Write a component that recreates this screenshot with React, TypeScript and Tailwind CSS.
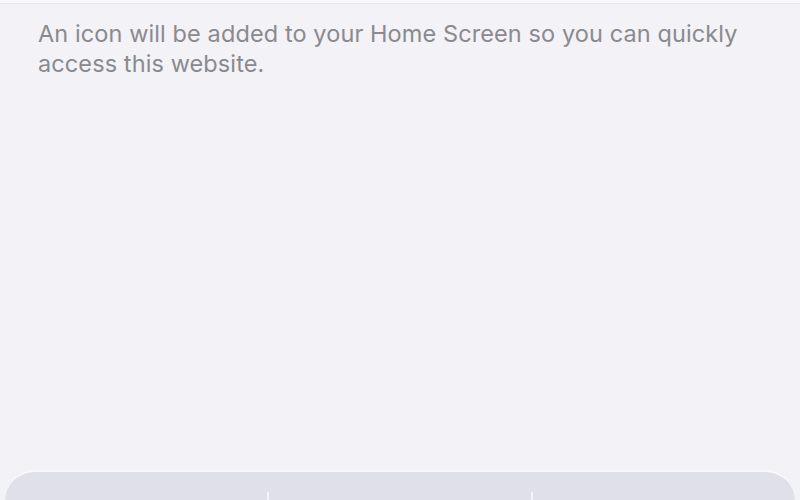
import React from "react";

export default function App() {
  return (
    <div
      className="w-[800px] h-[500px] overflow-hidden flex flex-col bg-[#f2f2f7]"
      style={{ fontFamily: 'Inter, "Noto Sans", sans-serif' }}
    >
      <div className="h-[4px] bg-[#f8f8fa] border-b border-[#e6e6ea]" />
      <p className="pl-[38px] pr-[20px] pt-[15px] text-[23.5px] leading-[30px] text-[#8a8a8e] tracking-[0.1px]">
        An icon will be added to your Home Screen so you can quickly access this website.
      </p>
      <div className="flex-1" />
      <div className="mx-[5px] h-[30px] rounded-t-[42px] bg-[#e0e0e8] border-t-2 border-[#f9f9fb] flex">
        <div className="flex-1" />
        <div className="flex-1 mt-[20px] border-l-2 border-[#f4f4f7]" />
        <div className="flex-1 mt-[20px] border-l-2 border-[#f4f4f7]" />
      </div>
    </div>
  );
}
